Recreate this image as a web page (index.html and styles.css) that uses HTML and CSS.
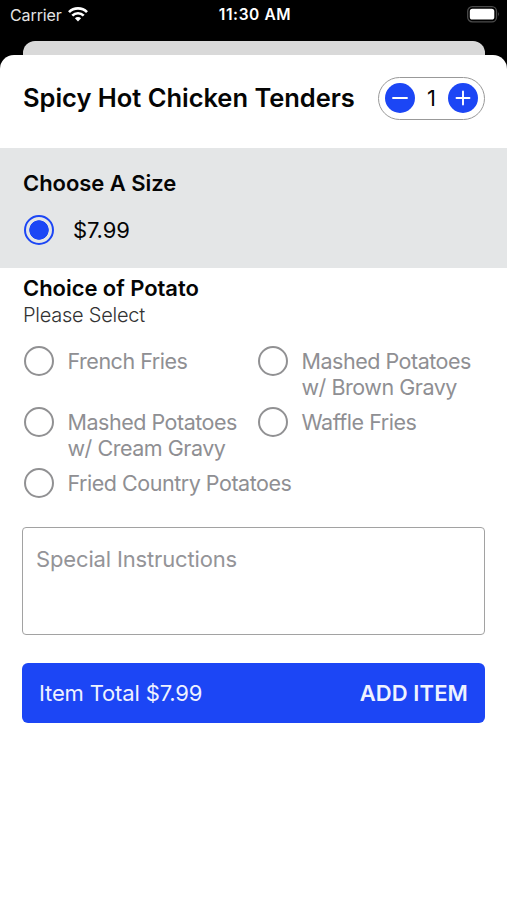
FILE: index.html
```html
<!DOCTYPE html>
<html lang="en">
<head>
<meta charset="utf-8">
<title>Spicy Hot Chicken Tenders</title>
<link rel="stylesheet" href="styles.css">
</head>
<body>
<header class="status">
  <div class="carrier"><span>Carrier</span>
    <svg class="wifi" viewBox="0 0 20 15" width="20" height="15" fill="none" stroke="#fff" stroke-width="2.7"><path d="M1 5.1a12.8 12.8 0 0 1 18 0M4.3 8.6a8.1 8.1 0 0 1 11.4 0"/><path d="M10 14.4 6.9 11.3a4.4 4.4 0 0 1 6.2 0z" fill="#fff" stroke="none"/></svg>
  </div>
  <span class="time">11:30 AM</span>
  <svg class="battery" viewBox="0 0 33 17" width="33" height="17"><rect x=".7" y=".7" width="28.8" height="15.1" rx="4.6" fill="none" stroke="#4b4b4b" stroke-width="1.3"/><rect x="2.8" y="2.8" width="24.5" height="10.8" rx="2.6" fill="#fff"/><path d="M31 6q1.6 2.2 0 4.5z" fill="#666"/></svg>
</header>
<div class="behind"></div>
<main class="sheet">
  <div class="heading">
    <h1>Spicy Hot Chicken Tenders</h1>
    <div class="stepper">
      <button class="step" aria-label="Decrease"><svg viewBox="0 0 30 30" width="30" height="30"><path d="M8 15h14"/></svg></button>
      <span class="count">1</span>
      <button class="step" aria-label="Increase"><svg viewBox="0 0 30 30" width="30" height="30"><path d="M8.5 15h13M15 8.5v13"/></svg></button>
    </div>
  </div>
  <section class="size">
    <h2>Choose A Size</h2>
    <div class="price"><span class="radio selected"></span><span>$7.99</span></div>
  </section>
  <section class="potato">
    <h2>Choice of Potato</h2>
    <p>Please Select</p>
    <div class="options">
      <div class="option"><span class="radio"></span><span>French Fries</span></div>
      <div class="option"><span class="radio"></span><span>Mashed Potatoes<br>w/ Brown Gravy</span></div>
      <div class="option"><span class="radio"></span><span>Mashed Potatoes<br>w/ Cream Gravy</span></div>
      <div class="option"><span class="radio"></span><span>Waffle Fries</span></div>
      <div class="option wide"><span class="radio"></span><span>Fried Country Potatoes</span></div>
    </div>
  </section>
  <div class="notes">Special Instructions</div>
  <button class="add"><span class="total">Item Total $7.99</span><span class="action">ADD ITEM</span></button>
</main>
</body>
</html>
```
FILE: styles.css
```css
* { box-sizing: border-box; }
body { margin: 0; width: 507px; height: 900px; overflow: hidden; background: #000; color: #050505; font-family: Inter, "Liberation Sans", sans-serif; font-size: 22px; display: flex; flex-direction: column; }
h1, h2, p { margin: 0; }
button { border: 0; padding: 0; font: inherit; }
.status { height: 41px; padding: 0 7px 0 10px; display: grid; grid-template-columns: 1fr auto 1fr; align-items: start; color: #fff; font-size: 16px; line-height: 30px; }
.carrier { display: flex; gap: 6px; color: #e4e4e4; letter-spacing: -.1px; }
.wifi { margin-top: 7px; }
.time { font-weight: 600; font-size: 15.5px; letter-spacing: .6px; }
.battery { justify-self: end; margin-top: 6px; }
.behind { height: 14px; margin: 0 22px 0 23px; background: #d9d9d9; border-radius: 12px 12px 0 0; }
.sheet { flex: 1; background: #fff; border-radius: 14px 14px 0 0; }
.heading { height: 93px; padding: 0 22px 7px 23px; display: flex; align-items: center; justify-content: space-between; }
h1 { font-size: 25.5px; font-weight: 600; line-height: 32px; letter-spacing: -.03px; white-space: nowrap; }
.stepper { width: 107px; height: 43px; border: 1.5px solid #999; border-radius: 22px; display: flex; align-items: center; justify-content: space-between; padding: 0 6px; }
.step { width: 30px; height: 30px; border-radius: 50%; background: #1c46f5; }
.step svg { display: block; fill: none; stroke: #fff; stroke-width: 1.9; stroke-linecap: round; }
.size { height: 120px; padding: 20px 23px 0; background: #e4e6e7; }
h2 { font-size: 22px; font-weight: 600; line-height: 30px; letter-spacing: -.05px; }
.price { display: flex; align-items: center; gap: 19px; margin: 17px 0 0 1px; height: 30px; letter-spacing: -.1px; }
.radio { flex: none; width: 30px; height: 30px; border: 2px solid #919193; border-radius: 50%; }
.selected { border-color: #1c46f5; background: radial-gradient(circle, #1c46f5 9.4px, transparent 10px); }
.potato { padding: 5px 22px 0 23px; }
.potato p { font-size: 20px; line-height: 24px; color: #333; font-weight: 350; letter-spacing: -.25px; }
.options { display: grid; grid-template-columns: 234px 1fr; grid-template-rows: 61.3px 61.3px 31px; margin: 18.5px 0 0 1px; color: #8f8f93; font-size: 21.5px; letter-spacing: -.48px; }
.option { display: flex; align-items: flex-start; gap: 13.5px; line-height: 26.5px; white-space: nowrap; }
.option span:last-child { margin-top: 2px; }
.wide { grid-column: 1 / -1; }
.notes { height: 108px; margin: 28px 22px 0 22px; border: 1.5px solid #a2a2a2; border-radius: 4px; padding: 17px 13px; line-height: 28px; color: #949498; letter-spacing: -.15px; }
.add { display: flex; align-items: center; justify-content: space-between; width: 463px; height: 60px; margin: 28px 22px 0; padding: 0 17px; border-radius: 6px; background: #1c46f5; color: #eef2ff; }
.total { letter-spacing: -.15px; }
.action { font-weight: 600; letter-spacing: .1px; }
```
